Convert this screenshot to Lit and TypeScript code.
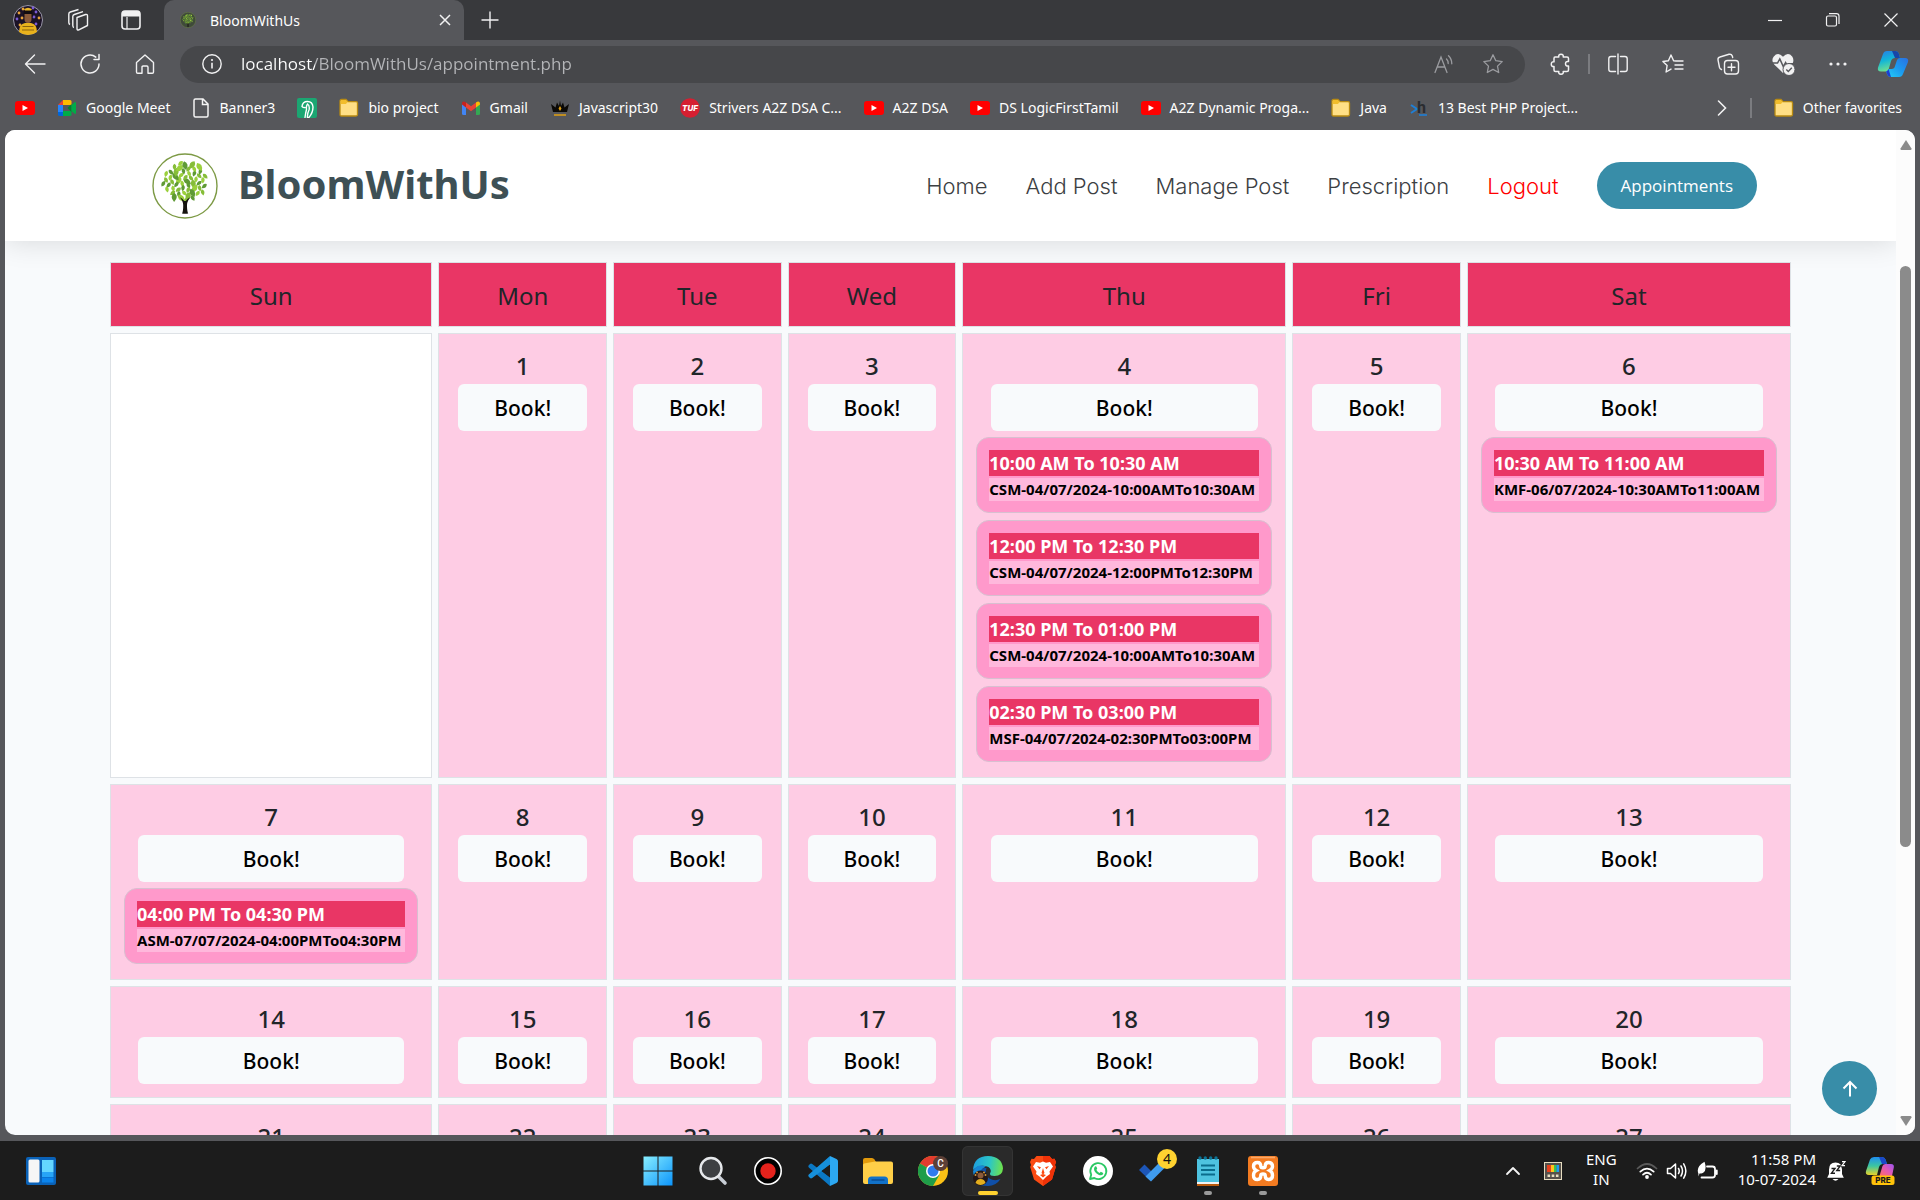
import { LitElement, html, svg, css, nothing, type TemplateResult } from "lit";
import { customElement } from "lit/decorators.js";

type Slot = { time: string; code: string };
type Day = { n: number | null; slots?: Slot[] };

const WEEKDAYS = ["Sun", "Mon", "Tue", "Wed", "Thu", "Fri", "Sat"];

const BOOKED: Record<number, Slot[]> = {
  4: [
    { time: "10:00 AM To 10:30 AM", code: "CSM-04/07/2024-10:00AMTo10:30AM" },
    { time: "12:00 PM To 12:30 PM", code: "CSM-04/07/2024-12:00PMTo12:30PM" },
    { time: "12:30 PM To 01:00 PM", code: "CSM-04/07/2024-10:00AMTo10:30AM" },
    { time: "02:30 PM To 03:00 PM", code: "MSF-04/07/2024-02:30PMTo03:00PM" },
  ],
  6: [{ time: "10:30 AM To 11:00 AM", code: "KMF-06/07/2024-10:30AMTo11:00AM" }],
  7: [{ time: "04:00 PM To 04:30 PM", code: "ASM-07/07/2024-04:00PMTo04:30PM" }],
};

/* July 2024 starts on a Monday, so the first Sunday cell stays blank. */
const WEEKS: Day[][] = [0, 1, 2, 3].map((w) =>
  WEEKDAYS.map((_, d) => {
    const n = w * 7 + d;
    return n === 0 ? { n: null } : { n, slots: BOOKED[n] };
  })
);

const icon = (w: number, h: number, box: string, body: TemplateResult) =>
  html`<svg class="ic" width=${w} height=${h} viewBox=${box} fill="none" aria-hidden="true">${body}</svg>`;

/* ---------- tree mark ---------- */
const LEAVES = 54;
const leaves = Array.from({ length: LEAVES }, (_, i) => {
  const r = 22.5 * Math.sqrt((i + 0.5) / LEAVES);
  const a = i * 2.39996;
  return {
    x: Math.round((33 + r * Math.cos(a)) * 10) / 10,
    y: Math.round((28.5 + r * 0.86 * Math.sin(a)) * 10) / 10,
    rot: Math.round((i * 47) % 110) - 55,
    c: i % 3 === 0 ? "#5f9a35" : i % 3 === 1 ? "#9bd03c" : "#86bd38",
    s: i % 4 === 0 ? 1.35 : 0.95,
  };
});
const tree = (size: number, plain: boolean) =>
  icon(
    size,
    size,
    "0 0 66 66",
    svg`<circle cx="33" cy="33" r="32" fill=${plain ? "#fff" : "#3f4a3a"} stroke="#7d9a45" stroke-width="1.4"/>
      ${leaves.map(
        (l) => svg`<path d="M0-3.400Q3.800-.6 0 3.400Q-3.800-.6 0-3.400Z" fill=${l.c} transform="translate(${l.x} ${l.y}) rotate(${l.rot}) scale(${l.s})"/>`
      )}
      <path d="M30 60.500q1.300-2 1.200-8.500q-.2-4.500-3.800-8q3.200 1.600 4.800 4h1.600q1.600-2.400 5-4q-3.600 3.400-3.800 8q0 6.500 1.200 8.500q-3.100.6-6.200 0Z" fill="#15130f"/>`
  );

/* ---------- avatar ---------- */
const avatar = (s: number) =>
  icon(
    s,
    s,
    "0 0 30 30",
    svg`<circle cx="15" cy="15" r="14.500" fill="#1b1226" stroke="#b9b6c8" stroke-width=".8"/>
      ${[[6, 8], [4, 14], [7, 20], [23, 7], [26, 13], [23, 19], [10, 4], [20, 3], [9, 13], [21, 12]].map(
        ([x, y], i) => svg`<circle cx=${x} cy=${y} r="1.400" fill=${i % 2 ? "#7b5bd6" : "#e8a33a"}/>`
      )}
      <path d="M10.500 9q0-5 4.500-5t4.500 5v3h-9Z" fill="#120c10"/>
      <path d="M11.500 9h7v5q0 4-3.500 4t-3.500-4Z" fill="#8a5a3a"/>
      <path d="M11 4.200q4-3 8 0l-1 1.200h-6Z" fill="#e8b52a"/>
      <path d="M6 27q0-8 6-9h6q6 1 6 9q-4 3-9 3t-9-3Z" fill="#e9b21c"/>
      <path d="M9.500 21.500h11M9 25h12" stroke="#8a6210" stroke-width="1"/>`
  );

/* ---------- favourites icons ---------- */
const youtube = icon(20, 20, "0 0 20 20", svg`<rect y="3" width="20" height="14" rx="3" fill="#f00"/><path d="M7.500 7v6l5.500-3Z" fill="#fff"/>`);
const folder = icon(
  20,
  20,
  "0 0 20 20",
  svg`<path d="M1 3q0-1.500 1.500-1.500h4.500l2.200 2.200h8q1.300 0 1.300 1.300v11.500q0 1.500-1.500 1.500H2.500Q1 18 1 16.500Z" fill="#ffdf85" stroke="#b88a12" stroke-width="1.300"/><path d="M1.600 6V3q0-1 1-1h4.200l2 2-2 2Z" fill="#f2bd2c"/>`
);
const meet = icon(
  20,
  20,
  "0 0 20 20",
  svg`<path d="M1 7l5-5v5Z" fill="#ea4335"/><path d="M1 7h5v7H1Z" fill="#2684fc"/><path d="M1 14h5v4H2.500Q1 18 1 16.500Z" fill="#0066da"/><path d="M6 2h7q1.500 0 1.500 1.500V7H6Z" fill="#ffba00"/><path d="M6 13h8.500v3.500Q14.500 18 13 18H6Z" fill="#00ac47"/><path d="M10.500 10l4-4v8Z" fill="#00832d"/><path d="M14.500 7l3.500-3q1 0 1 1v10q0 1-1 1l-3.500-3Z" fill="#00ac47"/>`
);
const pageFile = icon(18, 20, "0 0 18 20", svg`<path d="M2 2.500Q2 1 3.500 1H11l5 5v11.500q0 1.500-1.500 1.500h-11Q2 19 2 17.500ZM10.500 1v5.500H16" stroke="#f4f4f4" stroke-width="1.500"/>`);
const greenMark = icon(20, 20, "0 0 20 20", svg`<rect width="20" height="20" rx="2" fill="#1ba672"/><path d="M5 8.500Q5.500 3.500 10.500 3.500T16 9q0 6-4.500 11M5 8.500q1.500 1.500 3 1M10.500 6q2.500 1.500 1.500 6-2 4-1.500 8M10.500 6Q9 8 9.500 11.500q-1 4-1.500 8" stroke="#fff" stroke-width="1.400" stroke-linecap="round" stroke-linejoin="round"/>`);
const gmail = icon(
  20,
  20,
  "0 0 20 20",
  svg`<path d="M1 5.500l4 3V17H2.500Q1 17 1 15.500Z" fill="#4285f4"/><path d="M15 8.500l4-3v10q0 1.500-1.500 1.500H15Z" fill="#34a853"/><path d="M15 4.500q2-1.600 3.400-.6.6.5.600 1.600v1L15 9.500Z" fill="#fbbc04"/><path d="M5 4.500l5 3.800 5-3.800v5l-5 3.800-5-3.800Z" fill="#ea4335"/><path d="M1 5.500Q1 3.600 2.600 3.500q1 0 2.400 1v5l-4-3Z" fill="#c5221f"/>`
);
const crown = icon(20, 20, "0 0 20 20", svg`<path d="M3 14L1 6l4.500 3.500L7 4.500 9 8l1-5.500L11 8l2-3.500 1.500 5L19 6l-2 8Z" fill="#0b0906"/><path d="M4 17h12" stroke="#d99b14" stroke-width="1.600"/><path d="M10 8l1.500 2.500L10 13l-1.500-2.500Z" fill="#d99b14"/>`);
const tuf = icon(
  20,
  20,
  "0 0 20 20",
  svg`<circle cx="10" cy="10" r="9.800" fill="#d51f31"/><text x="10" y="13" text-anchor="middle" font-size="8" font-weight="800" font-style="italic" font-family="Inter, sans-serif" fill="#fff">TUF</text>`
);
const hacker = icon(
  20,
  20,
  "0 0 20 20",
  svg`<path d="M2 7l6 4-6 4" stroke="#1f7fd6" stroke-width="2"/><text x="8" y="15" font-size="16" font-weight="700" font-family="Roboto, sans-serif" fill="#2a2c30">h</text><path d="M10 17h8" stroke="#1f7fd6" stroke-width="1.600"/>`
);

const FAVOURITES: { label: string; art: TemplateResult }[] = [
  { label: "", art: youtube },
  { label: "Google Meet", art: meet },
  { label: "Banner3", art: pageFile },
  { label: "", art: greenMark },
  { label: "bio project", art: folder },
  { label: "Gmail", art: gmail },
  { label: "Javascript30", art: crown },
  { label: "Strivers A2Z DSA C...", art: tuf },
  { label: "A2Z DSA", art: youtube },
  { label: "DS LogicFirstTamil", art: youtube },
  { label: "A2Z Dynamic Proga...", art: youtube },
  { label: "Java", art: folder },
  { label: "13 Best PHP Project...", art: hacker },
];

/* ---------- browser chrome icons ---------- */
const W = "#f1f1f2";
const chrome = {
  workspaces: icon(24, 24, "0 0 24 24", svg`<g stroke=${W} stroke-width="1.400" stroke-linejoin="round"><path d="M11 9.500L19.500 6.500Q21.500 6 21.500 8V17.500L12.800 21.800Q11 22.500 11 20.500Z"/><path d="M8 19.500Q6.800 19.300 6.800 17.500V8.500Q6.800 7 8.300 6.500L17 3.700"/><path d="M4 16.500Q2.800 16 2.800 14.500V6Q2.800 4.500 4.300 4L12.500 1.500"/></g>`),
  tabs: icon(22, 22, "0 0 22 22", svg`<rect x="2" y="2" width="18" height="18" rx="3" stroke=${W} stroke-width="1.600"/><path d="M2 5q0-3 3-3h12q3 0 3 3v2.500H2Z" fill=${W}/><path d="M7 8v12" stroke=${W} stroke-width="1.200"/>`),
  close: icon(14, 14, "0 0 14 14", svg`<path d="M2 2l10 10M12 2L2 12" stroke=${W} stroke-width="1.500"/>`),
  plus: icon(20, 20, "0 0 20 20", svg`<path d="M10 1.500v17M1.500 10h17" stroke=${W} stroke-width="1.400"/>`),
  min: icon(14, 14, "0 0 14 14", svg`<path d="M0 7.500h14" stroke=${W} stroke-width="1.200"/>`),
  max: icon(16, 16, "0 0 16 16", svg`<rect x="1.500" y="4" width="10" height="10" rx="1.500" stroke=${W} stroke-width="1.200"/><path d="M4 1.600h7.500q2.500 0 2.500 2.500V12" stroke=${W} stroke-width="1.200"/>`),
  winClose: icon(16, 16, "0 0 16 16", svg`<path d="M1.500 1.500l13 13M14.500 1.500l-13 13" stroke=${W} stroke-width="1.200"/>`),
  back: icon(22, 22, "0 0 22 22", svg`<path d="M21 11H2M10.500 2L1.500 11l9 9" stroke=${W} stroke-width="1.400" stroke-linecap="round" stroke-linejoin="round"/>`),
  reload: icon(22, 22, "0 0 22 22", svg`<path d="M20 11a9 9 0 1 1-3.200-6.900M20 1.500V6.500H15" stroke=${W} stroke-width="1.500" stroke-linecap="round" stroke-linejoin="round"/>`),
  home: icon(22, 22, "0 0 22 22", svg`<path d="M2.500 9.500L11 2l8.500 7.500V19q0 1.200-1.200 1.200H14v-6q0-1.200-1.200-1.200H9.200Q8 13 8 14.200v6H3.700Q2.500 20.200 2.500 19Z" stroke=${W} stroke-width="1.400" stroke-linejoin="round"/>`),
  info: icon(22, 22, "0 0 22 22", svg`<circle cx="11" cy="11" r="9.200" stroke=${W} stroke-width="1.400"/><path d="M11 9.800v5.700" stroke=${W} stroke-width="1.600"/><circle cx="11" cy="7" r="1.100" fill=${W}/>`),
  read: icon(22, 22, "0 0 22 22", svg`<g stroke="#9b9ca0" stroke-width="1.300" stroke-linecap="round"><path d="M2 19.500L8 4l6 15.500M4.200 14h7.600"/><path d="M13.500 6q1.800 1.800 1.700 4.500M15.500 2.800q3.300 3.200 3.300 8"/></g>`),
  star: icon(22, 22, "0 0 22 22", svg`<path d="M11 1.800l2.800 5.900 6.400.9-4.700 4.500 1.200 6.400L11 16.400l-5.700 3.100 1.200-6.400-4.700-4.500 6.400-.9Z" stroke="#9b9ca0" stroke-width="1.300" stroke-linejoin="round"/>`),
  puzzle: icon(22, 22, "0 0 22 22", svg`<path d="M5 4h3.800q-.6-2.700 2.200-2.700T13.200 4H17q1.500 0 1.500 1.500v3q-3-.5-3 2.200t3 2.300v4q0 1.500-1.500 1.500h-3.800q.6 2.700-2.200 2.700t-2.200-2.700H5.500Q4 18.500 4 17v-3.500q-2.700.5-2.700-2.300T4 8.800V5.500Q4 4 5 4Z" stroke=${W} stroke-width="1.500" stroke-linejoin="round"/>`),
  split: icon(22, 22, "0 0 22 22", svg`<path d="M8.500 3.500H4Q1.800 3.500 1.800 5.700v10.600Q1.800 18.500 4 18.500h4.500M13.500 3.500H18q2.200 0 2.200 2.200v10.600q0 2.200-2.200 2.200h-4.500M11 1v20" stroke=${W} stroke-width="1.400" stroke-linecap="round"/>`),
  favs: icon(22, 22, "0 0 22 22", svg`<path d="M14 8l-2.400-.3L9 2 6.400 7.700.9 8.500l4.200 4-1 6.500 4.900-2.900M13.500 8h7.500M13 12h8M13 16h8" stroke=${W} stroke-width="1.400" stroke-linejoin="round" stroke-linecap="round"/>`),
  collections: icon(24, 24, "0 0 24 24", svg`<g stroke=${W} stroke-width="1.400" stroke-linecap="round"><rect x="8.500" y="8.500" width="14" height="13.500" rx="3"/><path d="M15.500 11.800v7M12 15.300h7M5.500 17.500Q4 17 3.500 15.500L2 7.800Q1.700 5.500 4 5L13 2.300Q15.500 1.800 16.300 4l.4 1.500"/></g>`),
  heart: icon(24, 24, "0 0 24 24", svg`<path d="M12 21L3.200 12.400Q-.2 8.500 2.800 4.500 7-.5 12 4.800 17-.5 21.200 4.500q2 3 .6 6.500L17 11Z" fill=${W}/><path d="M1.500 11h5l2.300-4 3.500 7.500 2.300-4 1.400 2.500" stroke="#56575b" stroke-width="1.500"/><circle cx="18" cy="17.500" r="6" fill=${W} stroke="#56575b" stroke-width="1"/><path d="M15.300 17.500l2 2 3.500-3.700" stroke="#56575b" stroke-width="1.400"/>`),
  dots: icon(20, 20, "0 0 20 20", svg`<g fill=${W}><circle cx="3" cy="10" r="1.600"/><circle cx="10" cy="10" r="1.600"/><circle cx="17" cy="10" r="1.600"/></g>`),
  chevron: icon(12, 18, "0 0 12 18", svg`<path d="M2.500 2l7 7-7 7" stroke=${W} stroke-width="1.600" stroke-linecap="round"/>`),
  copilot: icon(
    32,
    28,
    "0 0 32 28",
    svg`<defs>
        <linearGradient id="ca" x1="0" y1="0" x2=".3" y2="1"><stop stop-color="#2a7be4"/><stop offset=".5" stop-color="#12b5d8"/><stop offset="1" stop-color="#6fe08f"/></linearGradient>
        <linearGradient id="cb" x1="0" y1="1" x2="1" y2="0"><stop stop-color="#25d0f5"/><stop offset=".5" stop-color="#1b9af0"/><stop offset="1" stop-color="#2a6fe0"/></linearGradient>
      </defs>
      <path d="M6 4Q7 1 10 1h8q3 0 4 3l1 4h-5q-3 0-4 3l-2.500 9q-.5 1.500-2.500 1.500H4q-4 0-3-4Z" fill="url(#ca)"/>
      <path d="M15 1h3q3 0 4 3l1 4h-5Z" fill="#1846a8"/>
      <path d="M26 24q-1 3-4 3h-8q-3 0-4-3l-.8-2.600q1.800-.4 2.300-2.400h3q3 0 3.500-3l2-6q1-2 3-2h5q4 0 3 4Z" fill="url(#cb)"/>
      <path d="M9.200 21.400q1.800-.4 2.300-2.400l2.500 8q-3 0-4-3Z" fill="#1d3fd0"/>`
  ),
};

/* ---------- taskbar icons ---------- */
const task = {
  widgets: icon(30, 28, "0 0 30 28", svg`<rect width="30" height="28" rx="2" fill="#0a62b8"/><rect x="2.500" y="2.500" width="11" height="23" rx="1.500" fill="#f6f6f6"/><path d="M16 3h11.500v12H16Z" fill="#64d6ff"/><path d="M16 15h11.500v5H16Z" fill="#27a5f7"/><path d="M16 20.500h11.500v5H16Z" fill="#0b84ec"/>`),
  start: icon(30, 30, "0 0 30 30", svg`<defs><linearGradient id="st" x1="0" y1="0" x2="30" y2="30" gradientUnits="userSpaceOnUse"><stop stop-color="#8af0ff"/><stop offset="1" stop-color="#0a93fb"/></linearGradient></defs><path d="M.5.500h14v14H.5ZM15.500.500h14v14h-14ZM.5 15.500h14v14H.5ZM15.500 15.500h14v14h-14Z" fill="url(#st)"/>`),
  search: icon(30, 30, "0 0 30 30", svg`<path d="M20 20l7 7" stroke="#c9ced6" stroke-width="3.600" stroke-linecap="round"/><circle cx="13" cy="12.500" r="10.500" fill="#3d3f42" stroke="#e6e8eb" stroke-width="2.400"/>`),
  record: icon(30, 30, "0 0 30 30", svg`<circle cx="15" cy="15" r="13.200" fill="#000" stroke="#fff" stroke-width="1.600"/><circle cx="15" cy="15" r="7.700" fill="#e3221c"/>`),
  code: icon(30, 30, "0 0 30 30", svg`<path d="M22 0v30L.8 11.500Q-.2 10.300.8 9.200L2 8q1-.8 2.200 0L22 21.500" fill="#0b78c4"/><path d="M22 30V0v8.500L4.200 22q-1.200.8-2.200 0L.8 20.800q-1-1.100 0-2.300L22 0" fill="#1690dc"/><path d="M22 0l6.500 3q1.500.7 1.500 2.200v19.600q0 1.500-1.500 2.200L22 30Z" fill="#2ca8f2"/><path d="M22 9v12l-8-6Z" fill="#1c1c1c"/>`),
  files: icon(30, 28, "0 0 30 28", svg`<path d="M0 3q0-2 2-2h7q1.500 0 2.500 1.500L13 5v6H0Z" fill="#e29a0c"/><path d="M0 8q0-1 1-1.500L12 4.500h16q2 0 2 2V25q0 2-2 2H2q-2 0-2-2Z" fill="#ffcf48"/><path d="M5 27v-4q0-3.500 3.500-3.500h13Q25 19.500 25 23v4Z" fill="#1272c9"/><path d="M9 23h12" stroke="#0a4d95" stroke-width="1.400" stroke-linecap="round"/>`),
  chromeApp: icon(
    30,
    30,
    "0 0 30 30",
    svg`<circle cx="15" cy="15" r="15" fill="#fbc116"/><path d="M15 15L2 7.500A15 15 0 0 1 28 7.500H15Z" fill="#e33b2e"/><path d="M2 7.500A15 15 0 0 0 15 30l6.500-11.200L15 15Z" fill="#1f9d49"/><circle cx="15" cy="15" r="7" fill="#fff"/><circle cx="15" cy="15" r="5.500" fill="#2f7bf0"/>
    <circle cx="22.500" cy="7.500" r="7.500" fill="#5d4037"/><text x="22.500" y="11" text-anchor="middle" font-size="10" font-weight="500" font-family="Roboto, sans-serif" fill="#fff">C</text>`
  ),
  edge: icon(
    30,
    30,
    "0 0 30 30",
    svg`<defs><linearGradient id="ea" x1="0" y1=".4" x2="1" y2=".5"><stop stop-color="#1d9fe0"/><stop offset=".55" stop-color="#2cc6c6"/><stop offset="1" stop-color="#6fe34a"/></linearGradient></defs>
      <path d="M3 20Q0 30 15 30q8 0 12.500-7-6 2.500-11-.5-5.500-3.500-3-10.500-9-1-10.500 8Z" fill="#0f4fa8"/>
      <path d="M0 14Q1 0 15 0q14 .5 15 12.500-.5 7.500-8.500 7.500-5 0-4.500-2.500 2.200-3.500-1.500-6.500Q6.500 7.500 0 14Z" fill="url(#ea)"/>
      <path d="M0 15q4-8 13-4.500-8 3-6.500 15Q0 21 0 15Z" fill="#1687d6"/>
      <circle cx="7.500" cy="22" r="7.500" fill="#221716"/><circle cx="7.500" cy="19.500" r="3" fill="#8a5a3a"/><path d="M2.500 27q1-4 5-4t5 4q-5 4-10 0Z" fill="#e3ae1d"/><g fill="#d69536"><circle cx="2.500" cy="19" r="1"/><circle cx="12.500" cy="19" r="1"/><circle cx="4" cy="16.500" r="1"/><circle cx="11" cy="16.500" r="1"/></g>`
  ),
  brave: icon(
    26,
    30,
    "0 0 26 30",
    svg`<path d="M6.500 0h13l2.500 3 2.500-.3L26 6l-1 3 .8 2L22 23.500 13 30 4 23.500.2 11 1 9 0 6l1.500-3.300L4 3Z" fill="#fb4a13"/><path d="M13 0h6.500L22 3l2.500-.3L26 6l-1 3 .8 2L22 23.500 13 30Z" fill="#ef3208"/><path d="M6 6l4 .8L13 5.500l3 1.300 4-.8 3 4.500-3.500 5 .5 2.500-3.500 2.500L13 24l-3.500-3.500L6 18l.5-2.500L3 10.500Z" fill="#fff"/><path d="M7 10l4 1.300-1.500 2ZM19 10l-4 1.300 1.500 2ZM13 12l1.500 5-1.500 1.500L11.500 17ZM10 19l3-1 3 1-3 2.500Z" fill="#fb4a13"/>`
  ),
  whatsapp: icon(30, 30, "0 0 30 30", svg`<circle cx="15" cy="15" r="15" fill="#fff"/><path d="M7 23l1.200-4.300A8 8 0 1 1 11.300 22Z" stroke="#2ac864" stroke-width="1.800" stroke-linejoin="round"/><path d="M12 10.500q1-.8 1.500.3l.7 1.600q0 .6-.9 1.400 1.200 2.200 3.300 3.100l1.200-1.200 2 1q.8.500.2 1.500-1.500 2-4.500.5-4.500-2.500-4.500-5.700 0-1.500 1-2.500Z" fill="#2ac864"/>`),
  todo: icon(28, 24, "0 0 28 24", svg`<path d="M0 11l5.500-5.500L16 16l-5 5.500Z" fill="#1d56b8"/><path d="M6.500 17.500L23 1l5 5.500L12 22.500Z" fill="#3f9cf0"/>`),
  notepad: icon(24, 30, "0 0 24 30", svg`<path d="M1 3h22v24H1Z" fill="#4ec3e0"/><path d="M1 26h22v2H1Z" fill="#f2f2f2"/><path d="M1 28h22v2H1Z" fill="#b8590c"/><path d="M5 9.500h14M5 14h14M5 18.500h14" stroke="#0a6c8c" stroke-width="1.800"/><g fill="#0b7396"><circle cx="4" cy="2" r="1.700"/><circle cx="9.300" cy="2" r="1.700"/><circle cx="14.700" cy="2" r="1.700"/><circle cx="20" cy="2" r="1.700"/></g>`),
  xampp: icon(30, 30, "0 0 30 30", svg`<rect width="30" height="30" rx="3" fill="#f37b21"/><path d="M3 1.500h24" stroke="#fba868" stroke-width="1.600"/><path d="M9.500 6.500q-4 0-4 3.800 0 2.700 2.800 4.200-2.800 1.500-2.800 4.700 0 4.300 4 4.300 3.300 0 3.300-4 0-1.500 2.200-1.500t2.200 1.500q0 4 3.300 4 4 0 4-4.300 0-3.200-2.800-4.700 2.800-1.500 2.800-4.200 0-3.800-4-3.800-3.300 0-3.300 3.500 0 1.800-2.200 1.800t-2.200-1.800q0-3.500-3.300-3.500Z" stroke="#fff" stroke-width="3.400"/>`),
  up: icon(16, 10, "0 0 16 10", svg`<path d="M2 8l6-6 6 6" stroke="#f4f4f4" stroke-width="1.800" stroke-linecap="round" stroke-linejoin="round"/>`),
  palette: icon(18, 18, "0 0 18 18", svg`<rect x=".5" y=".5" width="17" height="17" fill="#55504a" stroke="#e6dcc0"/><path d="M3 3h4v7H3Z" fill="#e8401c"/><path d="M7 3h3v7H7Z" fill="#ffc21c"/><path d="M10 3h2.500v7H10Z" fill="#3cc24a"/><path d="M12.500 3H15v7h-2.500Z" fill="#1f9cf0"/><path d="M3.500 12.500h2.600v2.600H3.500ZM7.700 12.500h2.600v2.600H7.700ZM11.900 12.500h2.600v2.600h-2.600Z" fill="#e6dcc0"/>`),
  wifi: icon(22, 18, "0 0 22 18", svg`<g stroke-linecap="round" stroke-width="1.700"><path d="M1.500 6.500q9.500-9 19 0" stroke="#5a5a5a"/><path d="M4.300 9.700q6.700-6.300 13.400 0M7 12.600q4-3.700 8 0" stroke="#fff"/></g><circle cx="11" cy="15" r="1.900" fill="#fff"/>`),
  sound: icon(22, 20, "0 0 22 20", svg`<g stroke="#fff" stroke-width="1.500" stroke-linecap="round" stroke-linejoin="round"><path d="M1.500 7.500h3L9.500 3v14l-5-4.500h-3Z"/><path d="M12.500 7.500q1.500 2.500 0 5M15 5q3 5 0 10M17.700 2.800q4.300 7.200 0 14.400"/></g>`),
  battery: icon(22, 20, "0 0 22 20", svg`<path d="M11 5.500h5.500q2.500 0 2.500 2.500v6q0 2.500-2.500 2.500h-11M20.800 9.500v3.500" stroke="#fff" stroke-width="1.800" stroke-linecap="round"/><path d="M2.500 13Q-.5 6 8.500.8q2.800 8-1.300 11Q5.500 13 3.800 12.300l-1.800 3.200" fill="#fff"/>`),
  bell: icon(20, 22, "0 0 20 22", svg`<path d="M3 9.500Q3 2.500 9.500 2.500t6.500 7V14l1.800 3.700H1.200L3 14Z" fill="#fff"/><path d="M6.500 19h6q-3 3.400-6 0Z" fill="#fff"/><path d="M5.500 8.500H9l-3.500 4.700H9M10.800 6h3.400l-3.400 4.500h3.400" stroke="#1c1c1c" stroke-width="1.400"/><path d="M15 .8h5.500v6.400H15Z" fill="#1c1c1c"/><path d="M16 1.700h3l-3 4h3" stroke="#fff" stroke-width="1.200"/>`),
  copilotPre: icon(
    30,
    30,
    "0 0 30 30",
    svg`<defs>
      <linearGradient id="pa" x1="0" y1="0" x2="0" y2="1"><stop stop-color="#1f8ff0"/><stop offset=".5" stop-color="#3cc6a0"/><stop offset="1" stop-color="#e8d32a"/></linearGradient>
      <linearGradient id="pb" x1="0" y1="1" x2="1" y2="0"><stop stop-color="#ff6d62"/><stop offset=".5" stop-color="#e35ab4"/><stop offset="1" stop-color="#9b54f0"/></linearGradient></defs>
      <path d="M5 3.500Q6 1 9 1h8q2.500 0 3.500 2.500L22 8h-4q-3 0-4 3l-2 8H4q-4 0-3-4Z" fill="url(#pa)"/><path d="M14 1h3q2.500 0 3.500 2.500L22 8h-5Z" fill="#1a48c8"/>
      <path d="M14.500 20l3-10q.8-2 3-2H26q3.500 0 2.800 3.500L27 20Z" fill="url(#pb)"/>
      <rect x="6.500" y="19.500" width="23" height="9.500" rx="2.500" fill="#ffc20a"/><text x="18" y="27.200" text-anchor="middle" font-size="8" font-weight="800" font-family="Inter, sans-serif" fill="#1a1a1a">PRE</text>`
  ),
};

const APPS: { name: string; art: TemplateResult; state?: "active" | "open"; badge?: string }[] = [
  { name: "Start", art: task.start },
  { name: "Search", art: task.search },
  { name: "Recorder", art: task.record },
  { name: "Code editor", art: task.code },
  { name: "File Explorer", art: task.files },
  { name: "Chrome", art: task.chromeApp },
  { name: "Edge", art: task.edge, state: "active" },
  { name: "Brave", art: task.brave },
  { name: "WhatsApp", art: task.whatsapp },
  { name: "To Do", art: task.todo, badge: "4" },
  { name: "Notepad", art: task.notepad, state: "open" },
  { name: "XAMPP", art: task.xampp, state: "open" },
];

const reset = css`
  :host {
    display: block;
    font-family: "Noto Sans", "Open Sans", sans-serif;
  }
  *,
  *::before,
  *::after {
    box-sizing: border-box;
  }
  button {
    border: 0;
    padding: 0;
    background: none;
    color: inherit;
    font: inherit;
    cursor: pointer;
  }
  a {
    color: inherit;
    text-decoration: none;
  }
  .ic {
    display: block;
    flex: none;
  }
`;

@customElement("browser-frame")
class BrowserFrame extends LitElement {
  static styles = [
    reset,
    css`
      :host {
        color: #fff;
      }
      .strip {
        display: flex;
        height: 40px;
        background: #38393c;
      }
      .lead {
        display: flex;
        align-items: center;
        width: 164px;
        padding-left: 13px;
      }
      .lead button {
        display: grid;
        place-items: center;
        width: 53px;
        height: 40px;
      }
      .me {
        margin-right: 8px;
      }
      .tab {
        display: flex;
        align-items: center;
        gap: 14px;
        width: 300px;
        padding: 0 12px 0 16px;
        background: #56575b;
        border-radius: 10px 10px 0 0;
        font-size: 14px;
      }
      .tab-title {
        flex: 1;
      }
      .new {
        display: grid;
        place-items: center;
        width: 52px;
      }
      .window {
        display: flex;
        margin-left: auto;
      }
      .window button {
        display: grid;
        place-items: center;
        width: 58px;
      }
      .bar {
        display: flex;
        align-items: center;
        height: 48px;
        padding: 0 0 0 7px;
        background: #56575b;
      }
      .tool {
        display: grid;
        place-items: center;
        width: 55px;
        height: 37px;
        flex: none;
      }
      .address {
        display: flex;
        align-items: center;
        flex: 1;
        height: 37px;
        margin: 0 8px;
        padding: 0 8px 0 21px;
        background: #46474a;
        border-radius: 19px;
      }
      .url {
        flex: 1;
        min-width: 0;
        height: 30px;
        margin-left: 8px;
        padding: 0 0 0 10px;
        border: 0;
        outline: 0;
        font: 17px/30px "Open Sans", sans-serif;
        color: transparent;
        background: linear-gradient(to right, #fff 84px, #b4b5b8 84px);
        background-clip: text;
        -webkit-background-clip: text;
      }
      .address .tool {
        width: 49px;
      }
      .rule {
        width: 2px;
        height: 20px;
        background: #7b7c80;
        flex: none;
      }
      .favs {
        display: flex;
        align-items: center;
        gap: 22px;
        height: 42px;
        padding: 0 18px 3px 15px;
        background: #56575b;
        font-size: 14px;
        white-space: nowrap;
      }
      .fav {
        display: flex;
        align-items: center;
        gap: 9px;
      }
      .more {
        margin-left: auto;
      }
    `,
  ];

  render() {
    const tool = (name: string, art: TemplateResult) =>
      html`<button class="tool" aria-label=${name}>${art}</button>`;
    return html`
      <div class="strip">
        <div class="lead">
          <span class="me">${avatar(30)}</span>
          <button aria-label="Workspaces">${chrome.workspaces}</button>
          <button aria-label="Tab actions">${chrome.tabs}</button>
        </div>
        <div class="tab">
          ${tree(16, false)}
          <span class="tab-title">BloomWithUs</span>
          <button aria-label="Close tab">${chrome.close}</button>
        </div>
        <button class="new" aria-label="New tab">${chrome.plus}</button>
        <div class="window">
          <button aria-label="Minimize">${chrome.min}</button>
          <button aria-label="Restore">${chrome.max}</button>
          <button aria-label="Close">${chrome.winClose}</button>
        </div>
      </div>
      <div class="bar">
        ${tool("Back", chrome.back)} ${tool("Refresh", chrome.reload)} ${tool("Home", chrome.home)}
        <div class="address">
          ${chrome.info}
          <input class="url" aria-label="Address" value="localhost/BloomWithUs/appointment.php" />
          ${tool("Read aloud", chrome.read)} ${tool("Add to favorites", chrome.star)}
        </div>
        ${tool("Extensions", chrome.puzzle)}
        <span class="rule"></span>
        ${tool("Split screen", chrome.split)} ${tool("Favorites", chrome.favs)}
        ${tool("Collections", chrome.collections)} ${tool("Browser essentials", chrome.heart)}
        ${tool("Settings", chrome.dots)} ${tool("Copilot", chrome.copilot)}
      </div>
      <nav class="favs" aria-label="Favorites bar">
        ${FAVOURITES.map(
          (f) => html`<a class="fav" href="#">${f.art}${f.label ? html`<span>${f.label}</span>` : nothing}</a>`
        )}
        <button class="more" aria-label="More favorites">${chrome.chevron}</button>
        <span class="rule"></span>
        <a class="fav" href="#">${folder}<span>Other favorites</span></a>
      </nav>
    `;
  }
}

@customElement("site-header")
class SiteHeader extends LitElement {
  static styles = [
    reset,
    css`
      .head {
        display: flex;
        align-items: center;
        justify-content: space-between;
        height: 111px;
        padding: 0 139px 0 147px;
        background: #fff;
      }
      .brand {
        display: flex;
        align-items: center;
        gap: 20px;
        color: #3e5055;
        font: 700 40px/48px "Noto Sans", sans-serif;
      }
      .brand span {
        padding-bottom: 3px;
      }
      .menu {
        display: flex;
        align-items: center;
        gap: 38px;
        font: 350 22px/28px "Inter", sans-serif;
        color: #3c4043;
        white-space: nowrap;
      }
      .out {
        color: #f00;
      }
      .cta {
        padding: 0 24px;
        background: #388da8;
        border-radius: 25px;
        color: #fff;
        font: 17px/47px "Open Sans", sans-serif;
      }
    `,
  ];
  render() {
    return html`<header class="head">
      <a class="brand" href="#">${tree(66, true)}<span>BloomWithUs</span></a>
      <nav class="menu">
        <a href="#">Home</a><a href="#">Add Post</a><a href="#">Manage Post</a><a href="#">Prescription</a>
        <a class="out" href="#">Logout</a><a class="cta" href="#">Appointments</a>
      </nav>
    </header>`;
  }
}

@customElement("month-table")
class MonthTable extends LitElement {
  static styles = [
    reset,
    css`
      table {
        width: 100%;
        table-layout: fixed;
        border-collapse: separate;
        border-spacing: 6px;
        color: #212529;
      }
      .narrow {
        width: 10.25%;
      }
      .first {
        width: 19.6%;
      }
      th,
      td {
        border: 1px solid #dee2e6;
        vertical-align: top;
      }
      th {
        padding: 2px 0 0;
        background: #e93665;
        font-size: 24px;
        font-weight: 400;
        line-height: 61px;
      }
      td {
        padding: 14px 11px 13px;
        background: #fecce4;
      }
      .blank {
        background: #fff;
      }
      .num {
        font-size: 24px;
        font-weight: 500;
        line-height: 36px;
        text-align: center;
      }
      .book {
        display: block;
        margin: 0 5.5%;
        padding-top: 1px;
        border-radius: 6px;
        background: #f8fafc;
        color: #000;
        font-size: 21px;
        font-weight: 500;
        line-height: 46px;
        text-align: center;
      }
      .slots {
        display: grid;
        gap: 7px;
        padding: 6px 2px 2px;
      }
      .slot {
        padding: 12px 12px 11px;
        border: 1px solid #d8bfd0;
        border-radius: 13px;
        background: #ff99cb;
        font-weight: 700;
        white-space: nowrap;
      }
      .time {
        padding-top: 1px;
        background: #e93665;
        color: #fff;
        font-size: 18px;
        line-height: 25px;
      }
      .code {
        margin-top: 2px;
        background: #ffb8dc;
        color: #000;
        font-size: 15px;
        line-height: 23px;
      }
    `,
  ];
  render() {
    return html`<table>
      <colgroup>
        <col class="first" />
        <col class="narrow" span="3" />
        <col />
        <col class="narrow" />
        <col />
      </colgroup>
      <thead>
        <tr>
          ${WEEKDAYS.map((d) => html`<th scope="col">${d}</th>`)}
        </tr>
      </thead>
      <tbody>
        ${WEEKS.map(
          (w) => html`<tr>
            ${w.map((d) =>
              d.n === null
                ? html`<td class="blank"></td>`
                : html`<td>
                    <div class="num">${d.n}</div>
                    <a class="book" href="#">Book!</a>
                    ${d.slots
                      ? html`<div class="slots">
                          ${d.slots.map(
                            (s) => html`<div class="slot">
                              <div class="time">${s.time}</div>
                              <div class="code">${s.code}</div>
                            </div>`
                          )}
                        </div>`
                      : nothing}
                  </td>`
            )}
          </tr>`
        )}
      </tbody>
    </table>`;
  }
}

@customElement("task-bar")
class TaskBar extends LitElement {
  static styles = [
    reset,
    css`
      .bar {
        display: grid;
        grid-template-columns: 1fr auto 1fr;
        align-items: center;
        height: 59px;
        background: #1c1c1c;
        color: #fff;
      }
      .left {
        display: flex;
        padding-left: 26px;
      }
      .apps {
        display: flex;
      }
      .app {
        position: relative;
        display: grid;
        place-items: center;
        width: 51px;
        height: 50px;
        margin: 0 2px;
        border-radius: 6px;
      }
      .active {
        background: #2a2a2a;
        box-shadow: inset 0 0 0 1px #343434;
      }
      .active::after,
      .open::after {
        content: "";
        position: absolute;
        bottom: 1px;
        left: 50%;
        width: 8px;
        height: 4px;
        border-radius: 2px;
        background: #9a9a9a;
        transform: translateX(-50%);
      }
      .active::after {
        width: 20px;
        background: #ffd230;
      }
      .badge {
        position: absolute;
        top: 3px;
        right: 1px;
        width: 20px;
        height: 20px;
        border-radius: 50%;
        background: #ffd230;
        color: #111;
        font-size: 14px;
        line-height: 20px;
      }
      .tray {
        display: flex;
        align-items: center;
        justify-content: flex-end;
        padding-right: 25px;
        font-size: 15px;
        line-height: 20px;
        white-space: nowrap;
      }
      .lang {
        margin: 0 19px 0 24px;
        padding-bottom: 3px;
        text-align: center;
      }
      .status {
        display: flex;
        align-items: center;
        gap: 8px;
      }
      .clock {
        margin: 0 10px 0 20px;
        padding-bottom: 3px;
        text-align: right;
      }
      .gap {
        margin-right: 23px;
      }
      .preview {
        margin-left: 19px;
      }
    `,
  ];
  render() {
    return html`<footer class="bar">
      <div class="left"><button aria-label="Widgets">${task.widgets}</button></div>
      <div class="apps">
        ${APPS.map(
          (a) => html`<button class="app ${a.state ?? ""}" aria-label=${a.name}>
            ${a.art}${a.badge ? html`<span class="badge">${a.badge}</span>` : nothing}
          </button>`
        )}
      </div>
      <div class="tray">
        <button class="gap" aria-label="Show hidden icons">${task.up}</button>
        ${task.palette}
        <div class="lang">ENG<br />IN</div>
        <div class="status">${task.wifi}${task.sound}${task.battery}</div>
        <div class="clock">11:58 PM<br />10-07-2024</div>
        ${task.bell}
        <button class="preview" aria-label="Copilot preview">${task.copilotPre}</button>
      </div>
    </footer>`;
  }
}

@customElement("app-root")
class AppRoot extends LitElement {
  static styles = [
    reset,
    css`
      :host {
        display: flex;
        flex-direction: column;
        height: 100vh;
        overflow: hidden;
        background: #56575b;
      }
      .view {
        position: relative;
        display: grid;
        grid-template-columns: 1fr 19px;
        flex: 1;
        min-height: 0;
        margin: 0 5px 6px;
        border-radius: 10px;
        background: #f8fafc;
        overflow: hidden;
      }
      .page {
        min-width: 0;
        min-height: 0;
        overflow: hidden;
      }
      .top {
        position: relative;
        z-index: 1;
        box-shadow: 0 0 28px rgba(0, 0, 0, 0.14);
      }
      .month {
        padding: 15px 99px 0;
      }
      .scroll {
        display: flex;
        flex-direction: column;
        align-items: center;
        padding: 10px 0 9px;
        background: #fcfcfc;
      }
      .track {
        flex: 1;
        display: flex;
        flex-direction: column;
        width: 11px;
        padding: 116px 0 269px;
      }
      .thumb {
        flex: 1;
        border-radius: 6px;
        background: #8b8b8b;
      }
      .to-top {
        position: absolute;
        right: 38px;
        bottom: 19px;
        display: grid;
        place-items: center;
        width: 55px;
        height: 55px;
        border-radius: 50%;
        background: #388da8;
      }
    `,
  ];
  render() {
    return html`
      <browser-frame></browser-frame>
      <main class="view">
        <div class="page">
          <site-header class="top"></site-header>
          <month-table class="month"></month-table>
        </div>
        <div class="scroll">
          ${icon(12, 10, "0 0 12 10", svg`<path d="M6 0l5.500 8.500q.3 1.500-1 1.500h-9q-1.300 0-1-1.500Z" fill="#8b8b8b"/>`)}
          <div class="track"><div class="thumb"></div></div>
          ${icon(12, 10, "0 0 12 10", svg`<path d="M6 10L.5 1.500Q.2 0 1.500 0h9q1.300 0 1 1.500Z" fill="#8b8b8b"/>`)}
        </div>
        <button class="to-top" aria-label="Back to top">
          ${icon(16, 18, "0 0 16 18", svg`<path d="M8 16.500V2M1.500 8.500L8 2l6.500 6.500" stroke="#fff" stroke-width="2"/>`)}
        </button>
      </main>
      <task-bar></task-bar>
    `;
  }
}
